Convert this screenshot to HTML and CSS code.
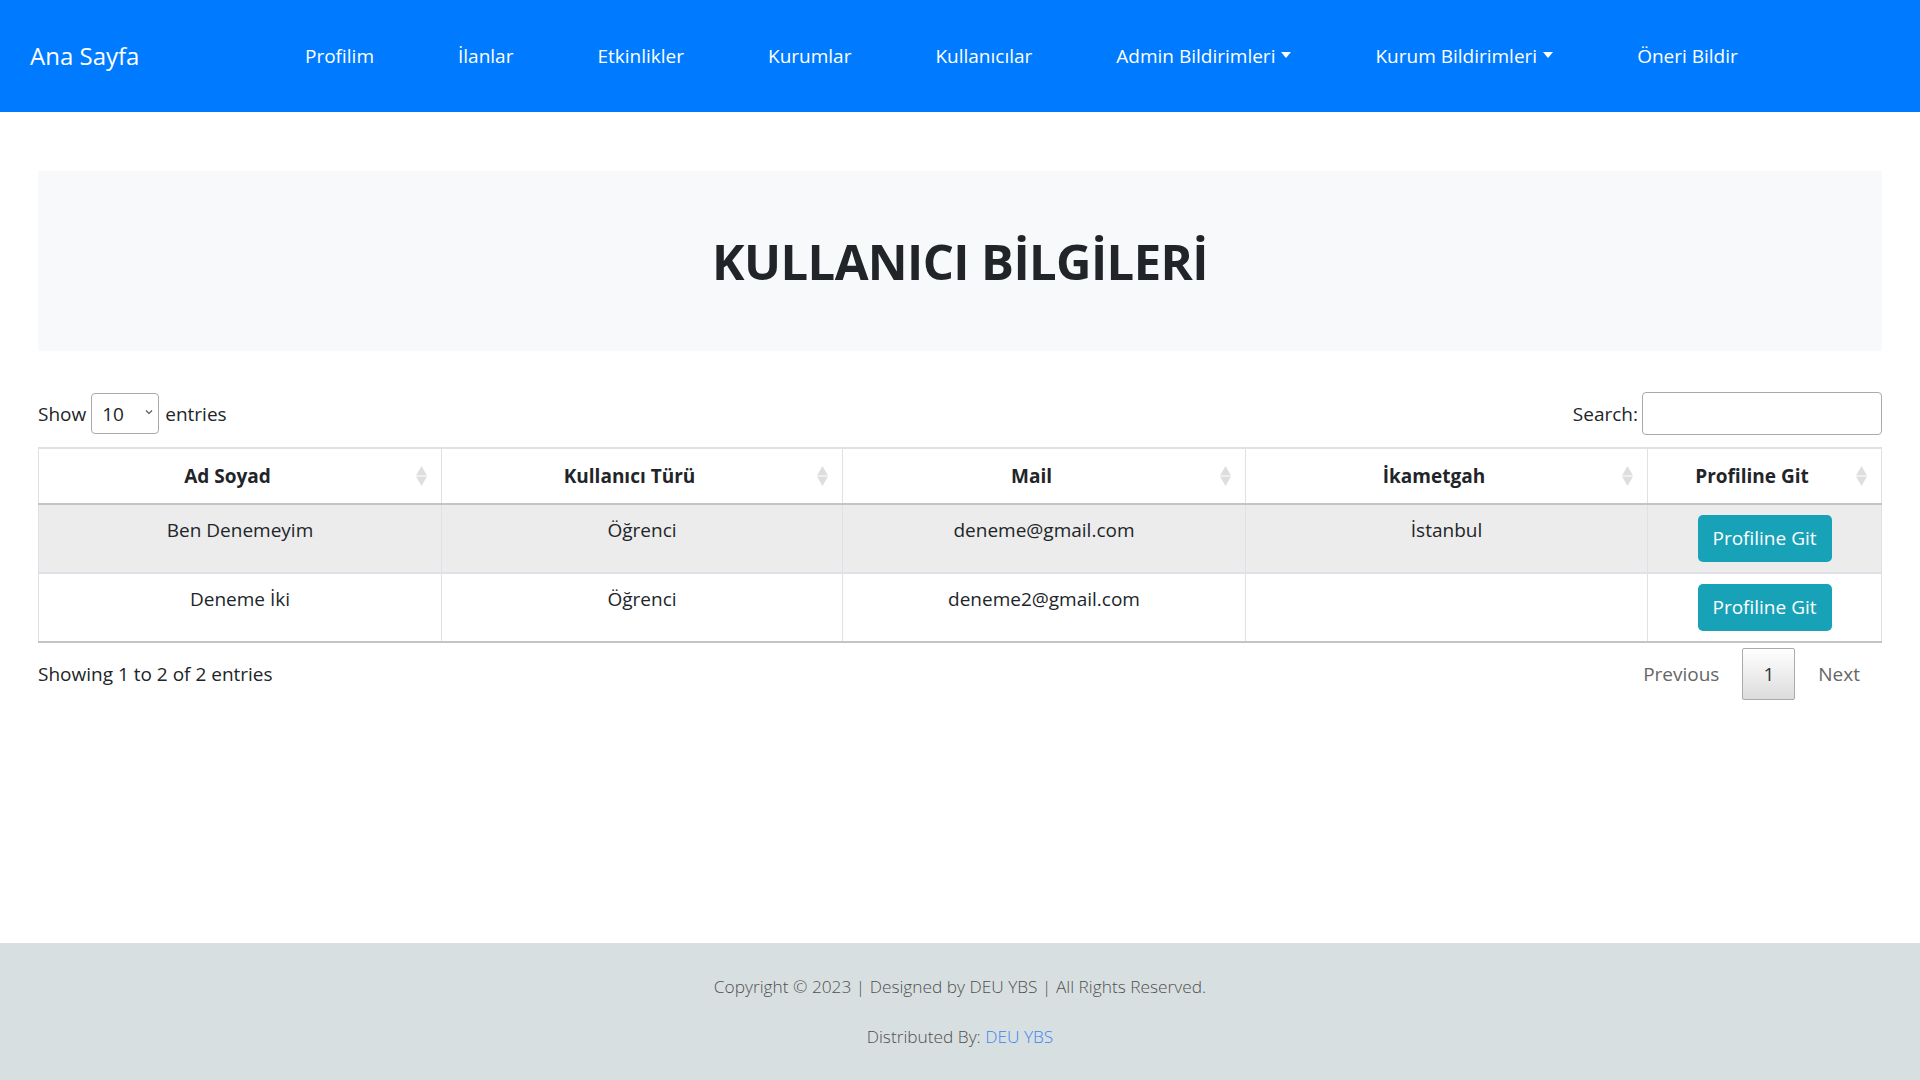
FILE: index.html
```html
<!DOCTYPE html>
<html lang="tr">
<head>
<meta charset="utf-8">
<title>Kullanıcı Bilgileri</title>
<link rel="stylesheet" href="styles.css">
</head>
<body>
<nav class="navbar">
  <a class="brand" href="#">Ana Sayfa</a>
  <ul class="nav">
    <li><a href="#">Profilim</a></li>
    <li><a href="#">İlanlar</a></li>
    <li><a href="#">Etkinlikler</a></li>
    <li><a href="#">Kurumlar</a></li>
    <li><a href="#">Kullanıcılar</a></li>
    <li><a href="#" class="dropdown">Admin Bildirimleri</a></li>
    <li><a href="#" class="dropdown">Kurum Bildirimleri</a></li>
    <li><a href="#">Öneri Bildir</a></li>
  </ul>
</nav>

<main class="main">
  <section class="jumbotron">
    <h1 class="title">KULLANICI BİLGİLERİ</h1>
  </section>

  <div class="controls">
    <label class="length">Show
      <span class="select-wrap">
        <select class="select"><option>10</option><option>25</option><option>50</option><option>100</option></select>
        <svg class="chev" width="8" height="6" viewBox="0 0 8 6"><path d="M1 1.5 L4 4.5 L7 1.5" fill="none" stroke="#555" stroke-width="1.1"/></svg>
      </span>
      entries</label>
    <label class="search">Search:<input type="search" class="search-input"></label>
  </div>

  <table class="table">
    <colgroup>
      <col class="c1"><col class="c2"><col class="c3"><col class="c4"><col class="c5">
    </colgroup>
    <thead>
      <tr>
        <th>Ad Soyad<svg class="sort" width="11" height="20" viewBox="0 0 11 20"><path d="M5.5 0 L11 9.4 L0 9.4 Z M0 10.6 L11 10.6 L5.5 20 Z" fill="#dedede"/></svg></th>
        <th>Kullanıcı Türü<svg class="sort" width="11" height="20" viewBox="0 0 11 20"><path d="M5.5 0 L11 9.4 L0 9.4 Z M0 10.6 L11 10.6 L5.5 20 Z" fill="#dedede"/></svg></th>
        <th>Mail<svg class="sort" width="11" height="20" viewBox="0 0 11 20"><path d="M5.5 0 L11 9.4 L0 9.4 Z M0 10.6 L11 10.6 L5.5 20 Z" fill="#dedede"/></svg></th>
        <th>İkametgah<svg class="sort" width="11" height="20" viewBox="0 0 11 20"><path d="M5.5 0 L11 9.4 L0 9.4 Z M0 10.6 L11 10.6 L5.5 20 Z" fill="#dedede"/></svg></th>
        <th>Profiline Git<svg class="sort" width="11" height="20" viewBox="0 0 11 20"><path d="M5.5 0 L11 9.4 L0 9.4 Z M0 10.6 L11 10.6 L5.5 20 Z" fill="#dedede"/></svg></th>
      </tr>
    </thead>
    <tbody>
      <tr class="odd">
        <td>Ben Denemeyim</td>
        <td>Öğrenci</td>
        <td>deneme@gmail.com</td>
        <td>İstanbul</td>
        <td><a href="#" class="btn">Profiline Git</a></td>
      </tr>
      <tr class="even">
        <td>Deneme İki</td>
        <td>Öğrenci</td>
        <td>deneme2@gmail.com</td>
        <td></td>
        <td><a href="#" class="btn">Profiline Git</a></td>
      </tr>
    </tbody>
  </table>

  <div class="table-footer">
    <div class="info">Showing 1 to 2 of 2 entries</div>
    <div class="paginate">
      <a href="#" class="page disabled">Previous</a>
      <a href="#" class="page current">1</a>
      <a href="#" class="page disabled">Next</a>
    </div>
  </div>
</main>

<footer class="footer">
  <p class="copy">Copyright © 2023 <span class="bar">|</span> Designed by DEU YBS <span class="bar">|</span> All Rights Reserved.</p>
  <p class="dist">Distributed By: <a href="#" class="link">DEU YBS</a></p>
</footer>
</body>
</html>
```

FILE: styles.css
```css
* { box-sizing: border-box; }
html, body { margin: 0; padding: 0; }
body {
  font-family: "Open Sans", "Noto Sans", sans-serif;
  font-size: 19px;
  line-height: 30px;
  color: #212529;
  background: #fff;
  min-height: 100vh;
  display: flex;
  flex-direction: column;
}
a { text-decoration: none; }

/* navbar */
.navbar {
  height: 112px;
  background: #007bff;
  display: flex;
  align-items: center;
  padding-left: 30px;
}
.brand {
  width: 275px;
  color: #fff;
  font-size: 24px;
  line-height: 32px;
}
.nav {
  display: flex;
  list-style: none;
  margin: 0;
  padding: 0;
  gap: 84px;
}
.nav a {
  color: #fff;
  font-size: 19px;
  display: flex;
  align-items: center;
}
.dropdown::after {
  content: "";
  display: inline-block;
  margin-left: 6px;
  border-top: 6px solid #fff;
  border-left: 5px solid transparent;
  border-right: 5px solid transparent;
  margin-top: -2px;
}

/* main */
.main {
  padding: 0 38px;
}
.jumbotron {
  margin-top: 59px;
  height: 180px;
  background: #f8f9fa;
  display: flex;
  align-items: center;
  justify-content: center;
}
.title {
  margin: 0;
  font-size: 49px;
  font-weight: 700;
  line-height: 60px;
  letter-spacing: -0.6px;
  color: #212529;
}

.controls {
  margin-top: 41px;
  height: 43px;
  display: flex;
  justify-content: space-between;
  align-items: center;
}
.length, .search {
  display: flex;
  align-items: center;
}
.select-wrap {
  position: relative;
  margin: 0 6px 0 5px;
  display: inline-block;
}
.select {
  appearance: none;
  -webkit-appearance: none;
  width: 68px;
  height: 41px;
  border: 1px solid #aaa;
  border-radius: 4px;
  background: #fff;
  font-family: inherit;
  font-size: 19px;
  color: #212529;
  padding: 0 0 0 10px;
}
.chev {
  position: absolute;
  right: 6px;
  top: 16px;
  pointer-events: none;
}
.search-input {
  width: 240px;
  height: 43px;
  margin-left: 4px;
  border: 1px solid #aaa;
  border-radius: 4px;
  font-family: inherit;
  font-size: 19px;
}

/* table */
.table {
  margin-top: 12px;
  width: 100%;
  border-collapse: collapse;
  table-layout: fixed;
  border: 1px solid #dee2e6;
  border-top-width: 2px;
}
.c1 { width: 403px; }
.c2 { width: 401px; }
.c3 { width: 403px; }
.c4 { width: 402px; }
.table th {
  position: relative;
  font-weight: 700;
  text-align: center;
  padding: 12px 37px 12px 12px;
  border-left: 1px solid #dee2e6;
  border-right: 1px solid #dee2e6;
  border-bottom: 2px solid #c4c4c4;
}
.sort {
  position: absolute;
  right: 14px;
  top: 17px;
}
.table td {
  text-align: center;
  vertical-align: top;
  padding: 10px;
  height: 67px;
  border: 1px solid #dee2e6;
  border-top-width: 2px;
}
.table tbody tr:first-child td {
  border-top: none;
}
.table tbody tr:last-child td {
  border-bottom: 2px solid #c4c4c4;
}
.odd td { background: #ececec; }
.even td { background: #fff; }
.btn {
  display: inline-block;
  width: 134px;
  height: 47px;
  line-height: 47px;
  background: #17a2b8;
  color: #fff;
  border-radius: 5px;
  font-size: 19px;
  text-align: center;
}

.table-footer {
  margin-top: 5px;
  display: flex;
  justify-content: space-between;
  align-items: center;
}
.paginate {
  display: flex;
  padding-right: 1px;
}
.page {
  display: block;
  margin-left: 2px;
  padding: 10px 20px;
  border: 1px solid transparent;
  border-radius: 2px;
  line-height: 30px;
  color: #666;
}
.page.current {
  color: #333;
  border-color: #aaa;
  background: linear-gradient(to bottom, #fff 0%, #dcdcdc 100%);
}

/* footer */
.footer {
  margin-top: auto;
  height: 137px;
  background: #d8dfe1;
  text-align: center;
  padding-top: 30px;
  font-size: 17.3px;
  font-weight: 300;
  color: #505050;
}
.footer p {
  margin: 0;
  line-height: 28px;
}
.footer .dist { margin-top: 22px; }
.bar { color: #505050; }
.link { color: #3b86ee; }
```
